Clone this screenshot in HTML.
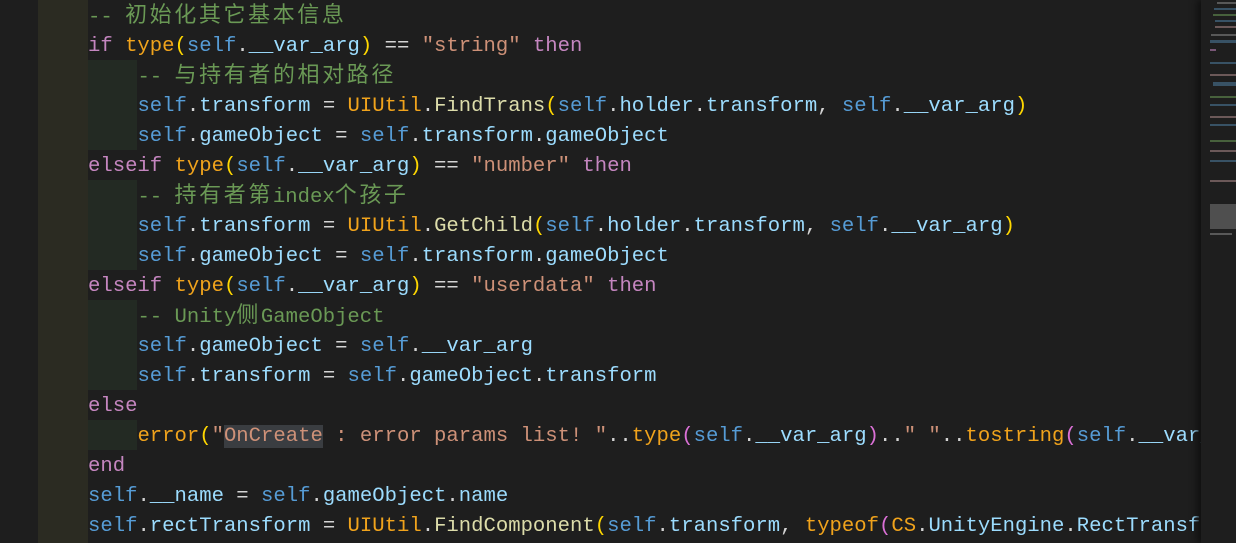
<!DOCTYPE html>
<html><head><meta charset="utf-8"><style>
html,body{margin:0;padding:0;background:#1e1e1e;width:1236px;height:543px;overflow:hidden}
.g1{position:absolute;left:38px;top:0;width:50px;height:543px;background:#2b2b22}
.ind{position:absolute;left:88px;width:49px;height:30px;background:#232a23}
.code{position:absolute;left:0;top:0;width:1201px;height:543px;overflow:hidden}
.l{position:absolute;left:88px;height:30px;line-height:30px;white-space:pre;font-family:"Liberation Mono","Noto Sans CJK SC",monospace;font-size:20.6px;color:#d4d4d4}
.c{color:#6a9955}.cj{font-size:22px;letter-spacing:2.6px}
.k{color:#c586c0}.f{color:#f0a31c}.s{color:#569cd6}.p{color:#9cdcfe}.m{color:#dcdcaa}.st{color:#ce9178}
.y{color:#ffd700}.pk{color:#da70d6}.o{color:#d4d4d4}
.hl{background:#3a3d41}
.mini{position:absolute;left:1201px;top:0;width:35px;height:543px;background:#1e1e1e;box-shadow:-4px 0 6px #111}
</style></head><body>
<div class="g1"></div>
<div class="ind" style="top:60px"></div><div class="ind" style="top:90px"></div><div class="ind" style="top:120px"></div>
<div class="ind" style="top:180px"></div><div class="ind" style="top:210px"></div><div class="ind" style="top:240px"></div>
<div class="ind" style="top:300px"></div><div class="ind" style="top:330px"></div><div class="ind" style="top:360px"></div>
<div class="ind" style="top:420px"></div>
<div class="code">
<div class="l" style="top:2px"><span class="c">-- <span class="cj">初始化其它基本信息</span></span></div>
<div class="l" style="top:32px"><span class="k">if</span> <span class="f">type</span><span class="y">(</span><span class="s">self</span>.<span class="p">__var_arg</span><span class="y">)</span> == <span class="st">"string"</span> <span class="k">then</span></div>
<div class="l" style="top:62px">    <span class="c">-- <span class="cj">与持有者的相对路径</span></span></div>
<div class="l" style="top:92px">    <span class="s">self</span>.<span class="p">transform</span> = <span class="f">UIUtil</span>.<span class="m">FindTrans</span><span class="y">(</span><span class="s">self</span>.<span class="p">holder</span>.<span class="p">transform</span>, <span class="s">self</span>.<span class="p">__var_arg</span><span class="y">)</span></div>
<div class="l" style="top:122px">    <span class="s">self</span>.<span class="p">gameObject</span> = <span class="s">self</span>.<span class="p">transform</span>.<span class="p">gameObject</span></div>
<div class="l" style="top:152px"><span class="k">elseif</span> <span class="f">type</span><span class="y">(</span><span class="s">self</span>.<span class="p">__var_arg</span><span class="y">)</span> == <span class="st">"number"</span> <span class="k">then</span></div>
<div class="l" style="top:182px">    <span class="c">-- <span class="cj">持有者第</span>index<span class="cj">个孩子</span></span></div>
<div class="l" style="top:212px">    <span class="s">self</span>.<span class="p">transform</span> = <span class="f">UIUtil</span>.<span class="m">GetChild</span><span class="y">(</span><span class="s">self</span>.<span class="p">holder</span>.<span class="p">transform</span>, <span class="s">self</span>.<span class="p">__var_arg</span><span class="y">)</span></div>
<div class="l" style="top:242px">    <span class="s">self</span>.<span class="p">gameObject</span> = <span class="s">self</span>.<span class="p">transform</span>.<span class="p">gameObject</span></div>
<div class="l" style="top:272px"><span class="k">elseif</span> <span class="f">type</span><span class="y">(</span><span class="s">self</span>.<span class="p">__var_arg</span><span class="y">)</span> == <span class="st">"userdata"</span> <span class="k">then</span></div>
<div class="l" style="top:302px">    <span class="c">-- Unity<span class="cj">侧</span>GameObject</span></div>
<div class="l" style="top:332px">    <span class="s">self</span>.<span class="p">gameObject</span> = <span class="s">self</span>.<span class="p">__var_arg</span></div>
<div class="l" style="top:362px">    <span class="s">self</span>.<span class="p">transform</span> = <span class="s">self</span>.<span class="p">gameObject</span>.<span class="p">transform</span></div>
<div class="l" style="top:392px"><span class="k">else</span></div>
<div class="l" style="top:422px">    <span class="f">error</span><span class="y">(</span><span class="st">"<span class="hl">OnCreate</span> : error params list! "</span>..<span class="f">type</span><span class="pk">(</span><span class="s">self</span>.<span class="p">__var_arg</span><span class="pk">)</span>..<span class="st">" "</span>..<span class="f">tostring</span><span class="pk">(</span><span class="s">self</span>.<span class="p">__var_arg</span><span class="pk">)</span><span class="y">)</span></div>
<div class="l" style="top:452px"><span class="k">end</span></div>
<div class="l" style="top:482px"><span class="s">self</span>.<span class="p">__name</span> = <span class="s">self</span>.<span class="p">gameObject</span>.<span class="p">name</span></div>
<div class="l" style="top:512px"><span class="s">self</span>.<span class="p">rectTransform</span> = <span class="f">UIUtil</span>.<span class="m">FindComponent</span><span class="y">(</span><span class="s">self</span>.<span class="p">transform</span>, <span class="f">typeof</span><span class="pk">(</span><span class="f">CS</span>.<span class="p">UnityEngine</span>.<span class="p">RectTransform</span><span class="pk">)</span><span class="y">)</span></div>
</div>
<div class="mini">
<svg width="35" height="543" style="position:absolute;left:0;top:0">
<g opacity="0.55">
<rect x="16" y="2" width="19" height="2" fill="#888"/>
<rect x="13" y="8" width="22" height="2" fill="#4f7ea0"/>
<rect x="12" y="14" width="23" height="2" fill="#6a9955"/>
<rect x="14" y="20" width="21" height="2" fill="#4f7ea0"/>
<rect x="14" y="26" width="21" height="2" fill="#a88"/>
<rect x="10" y="34" width="25" height="2" fill="#888"/>
<rect x="9" y="40" width="26" height="3" fill="#4f7ea0"/>
<rect x="9" y="49" width="6" height="2" fill="#c586c0"/>
<rect x="9" y="62" width="26" height="2" fill="#4f7ea0"/>
<rect x="9" y="74" width="26" height="2" fill="#a88"/>
<rect x="12" y="82" width="23" height="4" fill="#4f7ea0"/>
<rect x="9" y="96" width="26" height="2" fill="#6a9955"/>
<rect x="9" y="104" width="26" height="2" fill="#4f7ea0"/>
<rect x="9" y="116" width="26" height="2" fill="#a88"/>
<rect x="9" y="124" width="26" height="2" fill="#4f7ea0"/>
<rect x="9" y="140" width="26" height="2" fill="#6a9955"/>
<rect x="9" y="150" width="26" height="2" fill="#a88"/>
<rect x="9" y="160" width="26" height="2" fill="#4f7ea0"/>
<rect x="9" y="180" width="26" height="2" fill="#a88"/>
<rect x="9" y="204" width="26" height="25" fill="#777"/>
<rect x="9" y="233" width="22" height="2" fill="#888"/>
</g>
</svg>
</div>
</body></html>
